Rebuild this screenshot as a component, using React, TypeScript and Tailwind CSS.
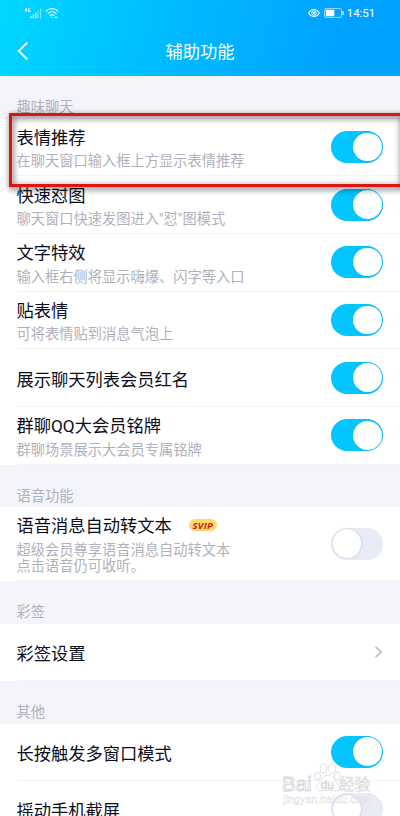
import React from 'react';
import clsx from 'clsx';

interface SettingRow {
  title: string;
  desc?: string[];
  on?: boolean;
  link?: boolean;
  svip?: boolean;
  height: string;
}

interface SettingSection {
  label: string;
  rows: SettingRow[];
}

const sections: SettingSection[] = [
  {
    label: '趣味聊天',
    rows: [
      { title: '表情推荐', desc: ['在聊天窗口输入框上方显示表情推荐'], on: true, height: 'h-[57.7px]' },
      { title: '快速怼图', desc: ['聊天窗口快速发图进入"怼"图模式'], on: true, height: 'h-[57.7px]' },
      { title: '文字特效', desc: ['输入框右侧将显示嗨爆、闪字等入口'], on: true, height: 'h-[57.7px]' },
      { title: '贴表情', desc: ['可将表情贴到消息气泡上'], on: true, height: 'h-[57.7px]' },
      { title: '展示聊天列表会员红名', on: true, height: 'h-[57.7px]' },
      { title: '群聊QQ大会员铭牌', desc: ['群聊场景展示大会员专属铭牌'], on: true, height: 'h-[57.7px]' },
    ],
  },
  {
    label: '语音功能',
    rows: [
      {
        title: '语音消息自动转文本',
        desc: ['超级会员尊享语音消息自动转文本', '点击语音仍可收听。'],
        on: false,
        svip: true,
        height: 'h-[74px]',
      },
    ],
  },
  { label: '彩签', rows: [{ title: '彩签设置', link: true, height: 'h-[57.4px]' }] },
  {
    label: '其他',
    rows: [
      { title: '长按触发多窗口模式', on: true, height: 'h-[57.4px]' },
      { title: '摇动手机截屏', on: false, height: 'h-[57.4px]' },
    ],
  },
];

function StatusBar() {
  return (
    <div className="flex h-[26px] items-center justify-between pl-[24px] pr-[25px]">
      <div className="flex items-center gap-[3px]">
        <svg width="18" height="12" viewBox="0 0 18 12" fill="none" stroke="#fff">
          <path d="M2.6 1 1 3.6h2.2M2.7 1v4M6.2 1.6H4.6v3h1.6V3.2h-.7" strokeWidth=".8" opacity=".9" />
          <path d="M7.2 9.2v2M9.4 7.6v3.6M11.8 5.5v5.7" strokeWidth="1.3" />
          <path d="M14.2 3.4v7.8M16.6 1.6v9.6" strokeWidth="1.1" opacity=".45" />
        </svg>
        <svg width="14" height="12" viewBox="0 0 14 12" fill="none" stroke="#fff" strokeWidth="1.1" strokeLinecap="round">
          <path d="M1 4.2c3.4-3.5 8.6-3.5 12 0M3 6.4c2.3-2.3 5.7-2.3 8 0M5 8.5c1.1-1.2 2.9-1.2 4 0" />
          <circle cx="6.6" cy="10.3" r=".7" fill="#fff" stroke="none" />
          <path d="M9.7 10.3h2.4" strokeWidth="1.3" opacity=".8" />
        </svg>
      </div>
      <div className="flex items-center">
        <svg width="12" height="10" viewBox="0 0 12 10" fill="none" stroke="#fff">
          <path d="M.7 5C3.3.3 8.7.3 11.3 5 8.7 9.7 3.3 9.7.7 5Z" strokeWidth="1.1" />
          <circle cx="6" cy="5" r="2.2" strokeWidth="1" />
          <circle cx="6" cy="5" r="1" fill="#fff" stroke="none" />
        </svg>
        <svg className="ml-[4px]" width="20" height="10" viewBox="0 0 20 10" fill="none">
          <rect x=".6" y=".6" width="16.8" height="8.8" rx="1.2" stroke="#fff" strokeOpacity=".65" strokeWidth=".9" />
          <rect x="1.8" y="1.8" width="8.5" height="6.4" fill="#fff" />
          <path d="M19 3v4" stroke="#fff" strokeWidth="1.2" />
        </svg>
        <span className="ml-[3px] pt-px font-[Roboto,sans-serif] text-[11.5px] leading-none tracking-[-0.1px] text-white">
          14:51
        </span>
      </div>
    </div>
  );
}

function Header() {
  return (
    <header className="h-[76px] shrink-0 bg-[linear-gradient(105deg,#00d8ff_0%,#00b9ff_45%,#00a2ff_85%)]">
      <StatusBar />
      <div className="grid h-[50px] grid-cols-[1fr_auto_1fr] items-center">
        <svg className="ml-[17px]" width="12" height="20" viewBox="0 0 12 20" fill="none" stroke="#fff" strokeWidth="1.8">
          <path d="M10.3 1.5 1.8 10l8.5 8.5" />
        </svg>
        <h1 className="pt-[3px] text-[17.25px] leading-none text-white">辅助功能</h1>
      </div>
    </header>
  );
}

function Toggle({ on }: { on: boolean }) {
  return (
    <div
      className={clsx(
        'flex h-[32px] w-[52px] shrink-0 items-center rounded-full px-[1.5px]',
        on ? 'justify-end bg-[#03c6ff]' : 'justify-start bg-[#e9ebf5]',
      )}
    >
      <div className="size-[28.5px] rounded-full bg-white shadow-[0_0_2px_rgba(60,90,140,0.35)]" />
    </div>
  );
}

function Row({ row }: { row: SettingRow }) {
  return (
    <div className={clsx('bg-white pl-[16.5px]', row.height)}>
      <div className="flex h-full items-center justify-between border-b border-[#f4f4f7] pr-[17px]">
        <div className={clsx('flex flex-col gap-[6.5px]', row.desc ? 'pt-[5px]' : 'pt-[4px]')}>
          <div className="flex items-center text-[17.25px] leading-[18px] text-[#0b0d1c]">
            {row.title}
            {row.svip && (
              <span className="mb-[2px] ml-[17px] flex h-[12px] w-[28px] items-center justify-center rounded-full bg-[#ffd76b] font-['Open_Sans',sans-serif] text-[9.5px] font-bold italic leading-none tracking-[0.3px] text-[#d01818]">
                SVIP
              </span>
            )}
          </div>
          {row.desc && (
            <div className="text-[14.25px] leading-[16.5px] text-[#b0b1bd]">
              {row.desc.map((line) => (
                <p key={line}>{line}</p>
              ))}
            </div>
          )}
        </div>
        {row.link ? (
          <svg width="9" height="14" viewBox="0 0 9 14" fill="none" stroke="#b2b4bd" strokeWidth="1.5">
            <path d="m1.5 1.8 5.7 5.2-5.7 5.2" />
          </svg>
        ) : (
          <Toggle on={!!row.on} />
        )}
      </div>
    </div>
  );
}

function Watermark() {
  return (
    <div className="absolute left-[282px] top-[761px] h-[48px] w-[92px] font-['Liberation_Sans','Noto_Sans_CJK_SC',sans-serif]">
      <svg width="92" height="48" viewBox="0 0 92 48" fill="#fff" fillOpacity=".75" stroke="#d3d5dc" strokeWidth=".8">
        <ellipse cx="35.5" cy="15" rx="3" ry="4" />
        <ellipse cx="41.5" cy="7.5" rx="3.3" ry="4.8" />
        <ellipse cx="50" cy="7.5" rx="3.3" ry="4.8" />
        <ellipse cx="55.5" cy="15" rx="3" ry="4" />
        <path d="M46 14c-5 0-6 5-9 8-4 4-3 8 2 8 3 0 5-1 8-1s5 1 7 1c5 0 5-5 1-8-3-3-4-8-9-8Z" />
        <text x="0" y="29.5" fontSize="20.5" strokeWidth=".9">Bai</text>
        <text x="38.5" y="28" fontSize="12" strokeWidth=".7">du</text>
        <text x="57" y="28.5" fontSize="15.5" strokeWidth=".6">经验</text>
        <text x="1" y="42" fontSize="10.8" strokeWidth=".35">jingyan.baidu.com</text>
      </svg>
    </div>
  );
}

export default function App() {
  return (
    <div className="relative flex h-[816px] w-[400px] flex-col overflow-hidden bg-[#f4f5fa] font-[Roboto,'Noto_Sans_CJK_SC',sans-serif]">
      <Header />

      {sections.map((section) => (
        <section key={section.label} className="shrink-0">
          <h2 className="flex h-[42.5px] items-end pb-[3.4px] pl-[16.5px] text-[14.25px] leading-[16px] text-[#b0b1bd]">
            {section.label}
          </h2>
          {section.rows.map((row) => (
            <Row key={row.title} row={row} />
          ))}
        </section>
      ))}

      {/* Callout frame around the first setting */}
      <div className="absolute left-[9px] top-[113px] h-[74px] w-[394px] border-[3px] border-[#e01212] drop-shadow-[1px_2px_3px_rgba(0,0,0,0.75)]" />

      <Watermark />
    </div>
  );
}
